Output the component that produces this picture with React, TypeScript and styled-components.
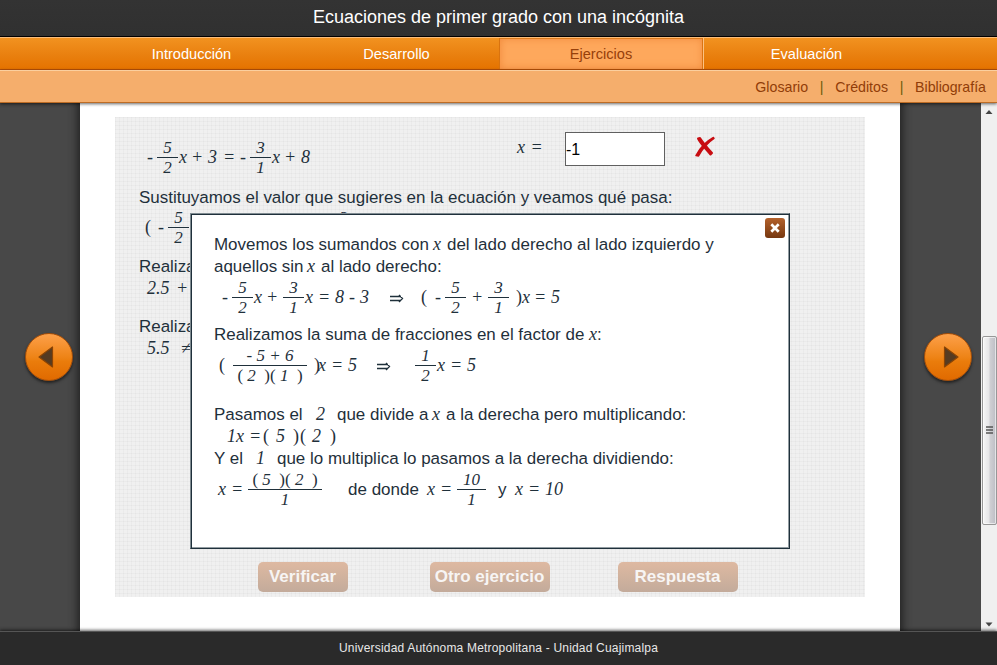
import React from "react";
import styled, { createGlobalStyle, css } from "styled-components";

const SANS = '"Liberation Sans", Arial, sans-serif';
const SERIF = '"Liberation Serif", "Times New Roman", serif';
const INK = "#1f303b";

const GlobalStyle = createGlobalStyle`
  * { box-sizing: border-box; }
  body { margin: 0; font-family: ${SANS}; overflow: hidden; }
`;

const Page = styled.div`
  display: flex;
  flex-direction: column;
  width: 997px;
  height: 665px;
`;

const Header = styled.header`
  height: 37px;
  background: linear-gradient(#333, #303030);
  border-bottom: 1px solid #000;
  color: #fff;
  font-size: 18px;
  line-height: 34px;
  text-align: center;
`;

const Nav = styled.nav`
  display: flex;
  height: 33px;
  padding-left: 89px;
  background: linear-gradient(#f29220, #e9800f 55%, #e57300);
  border-top: 1px solid #fbbd7b;
  border-bottom: 1px solid #b95208;
`;

const Tab = styled.a<{ $active?: boolean }>`
  width: 205px;
  height: 31px;
  color: #fff;
  font-size: 14.6px;
  line-height: 32px;
  text-align: center;
  ${(p) =>
    p.$active &&
    css`
      padding-right: 1px;
      color: #97400a;
      background: #fea85c;
      border-left: 1px solid #d9730f;
      border-right: 1px solid #fbc183;
      box-shadow: inset -1px 0 0 #dc7413, inset 0 1px 0 #dd7b1c, inset 0 0 9px #f1883a;
    `}
`;

const SubNav = styled.div`
  position: relative;
  z-index: 2;
  display: flex;
  justify-content: flex-end;
  height: 33px;
  padding-right: 11px;
  border-top: 1px solid #fbcf9f;
  border-bottom: 1px solid #bd6c25;
  background: #f5ae6c;
  box-shadow: 0 1px 3px rgba(0, 0, 0, 0.6);
  color: #913d08;
  font-size: 14.2px;
  line-height: 32px;
`;

const Divider = styled.span`
  width: 27px;
  text-align: center;
  color: #6b5a0b;
`;

const Main = styled.main`
  display: flex;
  height: 528px;
`;

const Side = styled.aside<{ $right?: boolean }>`
  display: flex;
  flex: none;
  width: ${(p) => (p.$right ? 81 : 80)}px;
  padding: ${(p) => (p.$right ? "230px 0 0 24px" : "230px 0 0 25px")};
  background: #484848;
  box-shadow: inset ${(p) => (p.$right ? 8 : -8)}px 0 8px -5px #242424;
`;

const RoundButton = styled.button`
  display: flex;
  align-items: center;
  justify-content: center;
  width: 48px;
  height: 48px;
  padding: 0;
  border: 1px solid #a64e08;
  border-radius: 50%;
  background: linear-gradient(#fda04a, #ee8417 50%, #ea7c0b 60%, #e06a00);
  box-shadow: 0 2px 3px rgba(0, 0, 0, 0.55);
`;

const Paper = styled.section`
  width: 820px;
  padding: 14px 35px 0;
  background: #fff;
`;

const Exercise = styled.div`
  position: relative;
  display: flex;
  flex-direction: column;
  width: 750px;
  height: 480px;
  padding: 20px 0 0 24px;
  background:
    repeating-linear-gradient(90deg, rgba(0, 0, 0, 0.022) 0 1px, transparent 1px 4px),
    repeating-linear-gradient(rgba(0, 0, 0, 0.022) 0 1px, transparent 1px 4px),
    #f0f0f0;
  color: ${INK};
`;

const TextLine = styled.div<{ $top?: number }>`
  display: flex;
  height: 22px;
  margin-top: ${(p) => p.$top ?? 0}px;
  font-size: 16.97px;
  line-height: 22px;
  white-space: pre;
`;

const MathLine = styled.div<{ $left: number; $top?: number; $short?: boolean }>`
  display: flex;
  align-items: center;
  height: ${(p) => (p.$short ? 22 : 41)}px;
  margin-top: ${(p) => p.$top ?? 0}px;
  padding-left: ${(p) => p.$left}px;
  font: italic 18px/21px ${SERIF};
  white-space: pre;
`;

const Slot = styled.span<{ $w: number }>`
  flex: none;
  width: ${(p) => p.$w}px;
`;

const Symbol = styled(Slot)`
  font: italic 18px/21px ${SERIF};
`;

const Upright = styled(Slot)`
  font-style: normal;
`;

const Words = styled(Slot)`
  font: 17px/22px ${SANS};
`;

const Fraction = styled.span<{ $w: number; $after?: number }>`
  display: flex;
  flex: none;
  flex-direction: column;
  align-items: center;
  width: ${(p) => p.$w}px;
  margin-right: ${(p) => p.$after ?? 0}px;
  font-size: 17px;
  line-height: 19px;
`;

const Over = styled.span`
  width: 100%;
  height: 20px;
  border-bottom: 1px solid ${INK};
  text-align: center;
`;

const Paren = styled.span`
  font-style: normal;
`;

const AnswerLabel = styled(Slot)`
  margin-top: -20px;
  word-spacing: 1px;
`;

const AnswerInput = styled.input`
  flex: none;
  width: 100px;
  height: 34px;
  margin: -17px 29px 0 0;
  padding: 1px 0 0 0;
  border: 1px solid #606060;
  background: #fff;
  color: #000;
  font: 16px ${SANS};
`;

const WrongIcon = styled.svg`
  flex: none;
  margin-top: -21px;
`;

const Actions = styled.div`
  display: flex;
  margin: auto 0 5px 119px;
`;

const Action = styled.button<{ $w: number; $after?: number }>`
  width: ${(p) => p.$w}px;
  height: 30px;
  margin-right: ${(p) => p.$after ?? 0}px;
  padding: 0 1px 0 0;
  border: 0;
  border-radius: 5px;
  background: linear-gradient(#deb9a1, #c3ab9b);
  color: #f7f5f4;
  font: bold 17px ${SANS};
  white-space: nowrap;
`;

const Dialog = styled.div`
  position: absolute;
  left: 75px;
  top: 96px;
  width: 600px;
  height: 336px;
  padding: 20px 0 0 23px;
  border: 1px solid ${INK};
  border-top-color: #7f8b91;
  border-left-color: #7f8b91;
  background: #fff;
  box-shadow: inset 1px 1px 0 ${INK}, inset -1px -1px 0 #929ca1;
`;

const CloseButton = styled.button`
  position: absolute;
  top: 4px;
  right: 4px;
  display: flex;
  align-items: center;
  justify-content: center;
  width: 20px;
  height: 20px;
  padding: 0;
  border: 0;
  border-radius: 3px;
  background: linear-gradient(#b4622c, #76370f);
`;

const Scrollbar = styled.div`
  display: flex;
  flex-direction: column;
  align-items: center;
  width: 16px;
  padding: 7px 0 4px;
  background: #f0f0f0;
`;

const Thumb = styled.div`
  display: flex;
  align-items: center;
  justify-content: center;
  width: 15px;
  height: 189px;
  margin: 221px 0 auto 1px;
  border: 1px solid #979797;
  border-radius: 2px;
  background: linear-gradient(90deg, #f6f6f6, #e6e6e8 45%, #cfcfd3 55%, #bdbdc4);
  box-shadow: inset 0 0 0 1px rgba(255, 255, 255, 0.6);
`;

const Footer = styled.footer`
  position: relative;
  z-index: 2;
  height: 34px;
  border-top: 1px solid #555;
  background: #2a2a2a;
  box-shadow: 0 -1px 3px rgba(0, 0, 0, 0.6);
  color: #e8e8e8;
  font-size: 12px;
  letter-spacing: 0.19px;
  line-height: 32px;
  text-align: center;
`;

type FracProps = { top: React.ReactNode; bottom: React.ReactNode; w?: number; after?: number };

const Frac = ({ top, bottom, w = 21, after = 0 }: FracProps) => (
  <Fraction $w={w} $after={after}>
    <Over>{top}</Over>
    <span>{bottom}</span>
  </Fraction>
);

const Product = ({ a, b }: { a: number; b: number }) => (
  <>
    <Paren>( </Paren>{a}<Paren>{"  )( "}</Paren>{b}<Paren>{"  )"}</Paren>
  </>
);

const Arrow = ({ left }: { left?: boolean }) => (
  <svg width="24" height="28" viewBox="0 0 24 28">
    <path
      d={left ? "M15.5 4 L15.5 24 L2 14 Z" : "M8.5 4 L8.5 24 L22 14 Z"}
      fill="#553b22"
      stroke="#8a4405"
      strokeWidth="1.2"
      strokeLinejoin="round"
    />
  </svg>
);

const Implies = () => (
  <svg width="14" height="9" viewBox="0 0 14 9" fill="none" stroke={INK} strokeWidth="1.3">
    <path d="M0 2.5H11M0 6.5H11M9 1L12.5 4.5L9 8" />
  </svg>
);

export default function App() {
  return (
    <Page>
      <GlobalStyle />
      <Header>Ecuaciones de primer grado con una incógnita</Header>
      <Nav>
        <Tab>Introducción</Tab>
        <Tab>Desarrollo</Tab>
        <Tab $active>Ejercicios</Tab>
        <Tab>Evaluación</Tab>
      </Nav>
      <SubNav>
        <span>Glosario</span>
        <Divider>|</Divider>
        <span>Créditos</span>
        <Divider>|</Divider>
        <span>Bibliografía</span>
      </SubNav>

      <Main>
        <Side>
          <RoundButton aria-label="Anterior"><Arrow left /></RoundButton>
        </Side>
        <Paper>
          <Exercise>
            <MathLine $left={8}>
              <Slot $w={10}>-</Slot>
              <Frac top="5" bottom="2" after={1} />
              <Slot $w={12}>x</Slot>
              <Slot $w={17}>+</Slot>
              <Slot $w={15}>3</Slot>
              <Slot $w={17}>=</Slot>
              <Slot $w={10}>-</Slot>
              <Frac top="3" bottom="1" after={1} />
              <Slot $w={12}>x</Slot>
              <Slot $w={17}>+</Slot>
              <Slot $w={216}>8</Slot>
              <AnswerLabel $w={48}>x =</AnswerLabel>
              <AnswerInput defaultValue="-1" />
              <WrongIcon width="22" height="22" viewBox="0 0 22 22">
                <path
                  d="M4 2.5C6 7 12 13 16.5 18.5L18 17C13.500 12 9 6.500 6 2Z"
                  fill="#c80d12"
                  stroke="#c80d12"
                  strokeWidth="2"
                  strokeLinejoin="round"
                />
                <path
                  d="M19.500 1.500C13 5 6 12 2 19.500L4.500 20C8 13.500 14 6.500 20 2.500Z"
                  fill="#c80d12"
                  stroke="#c80d12"
                  strokeWidth="1.500"
                  strokeLinejoin="round"
                />
              </WrongIcon>
            </MathLine>
            <TextLine $top={9}>Sustituyamos el valor que sugieres en la ecuación y veamos qué pasa:</TextLine>
            <MathLine $left={6} $top={-2}>
              <Upright $w={13}>(</Upright>
              <Slot $w={10}>-</Slot>
              <Frac top="5" bottom="2" after={144} />
              <Frac top="3" bottom="1" />
            </MathLine>
            <TextLine $top={8}>Realizamos</TextLine>
            <MathLine $short $left={8} $top={-1}>
              <Slot $w={29}>2.5</Slot>
              <Slot $w={15}>+</Slot>
            </MathLine>
            <TextLine $top={17}>Realizamos</TextLine>
            <MathLine $short $left={8} $top={-1}>
              <Slot $w={34}>5.5</Slot>
              <Slot $w={16}>≠</Slot>
            </MathLine>
            <Actions>
              <Action $w={90} $after={82}>Verificar</Action>
              <Action $w={120} $after={68}>Otro ejercicio</Action>
              <Action $w={120}>Respuesta</Action>
            </Actions>

            <Dialog>
              <CloseButton aria-label="Cerrar">
                <svg width="12" height="12" viewBox="0 0 12 12">
                  <path d="M2.3 2.3L9.7 9.7M9.7 2.3L2.3 9.7" stroke="#fff" strokeWidth="2.7" />
                </svg>
              </CloseButton>
              <TextLine>
                <Slot $w={219}>Movemos los sumandos con</Slot>
                <Symbol $w={14}>x</Symbol>
                <span>del lado derecho al lado izquierdo y</span>
              </TextLine>
              <TextLine>
                <Slot $w={93}>aquellos sin</Slot>
                <Symbol $w={14}>x</Symbol>
                <span>al lado derecho:</span>
              </TextLine>
              <MathLine $left={8} $top={-1}>
                <Slot $w={10}>-</Slot>
                <Frac top="5" bottom="2" after={1} />
                <Slot $w={12}>x</Slot>
                <Slot $w={17}>+</Slot>
                <Frac top="3" bottom="1" after={1} />
                <Slot $w={13}>x</Slot>
                <Slot $w={17}>=</Slot>
                <Slot $w={14}>8</Slot>
                <Slot $w={11}>-</Slot>
                <Slot $w={30}>3</Slot>
                <Slot $w={31}><Implies /></Slot>
                <Upright $w={14}>(</Upright>
                <Slot $w={10}>-</Slot>
                <Frac top="5" bottom="2" after={5} />
                <Slot $w={17}>+</Slot>
                <Frac top="3" bottom="1" after={7} />
                <Upright $w={6}>)</Upright>
                <Slot $w={12}>x</Slot>
                <Slot $w={17}>=</Slot>
                <Slot $w={10}>5</Slot>
              </MathLine>
              <TextLine $top={6}>
                <Slot $w={375}>Realizamos la suma de fracciones en el factor de</Slot>
                <Symbol $w={8}>x</Symbol>
                <span>:</span>
              </TextLine>
              <MathLine $left={5} $top={-1}>
                <Upright $w={14}>(</Upright>
                <Frac w={74} after={7} top="- 5 + 6" bottom={<Product a={2} b={1} />} />
                <Upright $w={4}>)</Upright>
                <Slot $w={13}>x</Slot>
                <Slot $w={17}>=</Slot>
                <Slot $w={29}>5</Slot>
                <Slot $w={38}><Implies /></Slot>
                <Frac top="1" bottom="2" after={1} />
                <Slot $w={13}>x</Slot>
                <Slot $w={17}>=</Slot>
                <Slot $w={10}>5</Slot>
              </MathLine>
              <TextLine $top={18}>
                <Slot $w={102}>Pasamos el</Slot>
                <Symbol $w={21}>2</Symbol>
                <Slot $w={95}>que divide a</Slot>
                <Symbol $w={14}>x</Symbol>
                <span>a la derecha pero multiplicando:</span>
              </TextLine>
              <MathLine $short $left={13} $top={-1}>
                <Slot $w={9}>1</Slot>
                <Slot $w={13}>x</Slot>
                <Slot $w={14}>=</Slot>
                <Upright $w={13}>(</Upright>
                <Slot $w={17}>5</Slot>
                <Upright $w={7}>)</Upright>
                <Upright $w={12}>(</Upright>
                <Slot $w={18}>2</Slot>
                <Upright $w={8}>)</Upright>
              </MathLine>
              <TextLine $top={1}>
                <Slot $w={42}>Y el</Slot>
                <Symbol $w={21}>1</Symbol>
                <span>que lo multiplica lo pasamos a la derecha dividiendo:</span>
              </TextLine>
              <MathLine $left={4} $top={-1}>
                <Slot $w={13}>x</Slot>
                <Slot $w={17}>=</Slot>
                <Frac w={74} after={26} top={<Product a={5} b={2} />} bottom="1" />
                <Words $w={79}>de donde</Words>
                <Slot $w={13}>x</Slot>
                <Slot $w={17}>=</Slot>
                <Frac w={29} after={12} top="10" bottom="1" />
                <Words $w={17}>y</Words>
                <Slot $w={13}>x</Slot>
                <Slot $w={17}>=</Slot>
                <Slot $w={20}>10</Slot>
              </MathLine>
            </Dialog>
          </Exercise>
        </Paper>
        <Side $right>
          <RoundButton aria-label="Siguiente"><Arrow /></RoundButton>
        </Side>
        <Scrollbar>
          <svg width="8" height="5" viewBox="0 0 8 5"><path d="M4 0L7.5 4H.5Z" fill="#444" /></svg>
          <Thumb>
            <svg width="8" height="9" viewBox="0 0 8 9">
              <path d="M0 1H7M0 4H7M0 7H7" stroke="#555" strokeWidth="1.6" />
            </svg>
          </Thumb>
          <svg width="8" height="5" viewBox="0 0 8 5"><path d="M4 4.5L7.5 .5H.5Z" fill="#444" /></svg>
        </Scrollbar>
      </Main>
      <Footer>Universidad Autónoma Metropolitana - Unidad Cuajimalpa</Footer>
    </Page>
  );
}
